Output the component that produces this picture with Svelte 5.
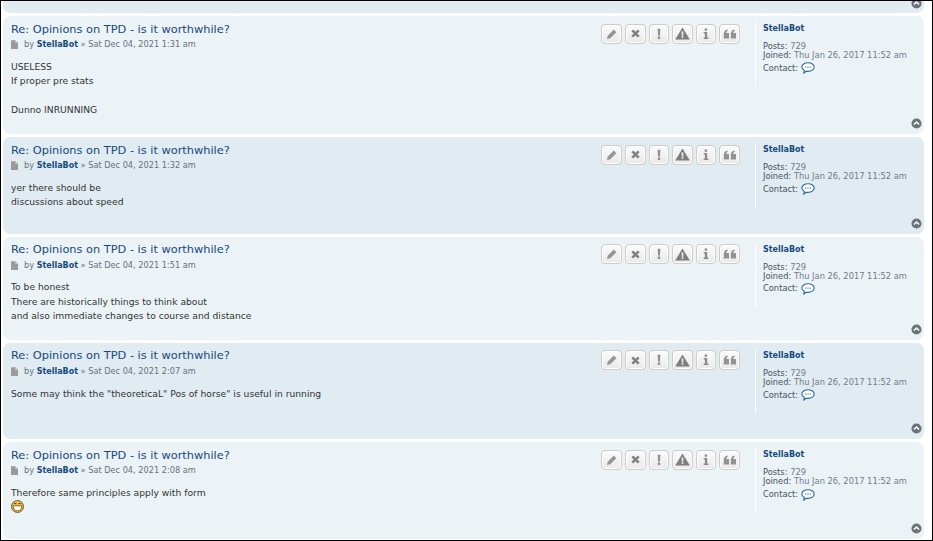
<script>
  const posts = [
    { time: 'Sat Dec 04, 2021 1:31 am', lines: ['USELESS', 'If proper pre stats', '', 'Dunno INRUNNING'], alt: false, height: 118 },
    { time: 'Sat Dec 04, 2021 1:32 am', lines: ['yer there should be', 'discussions about speed'], alt: true, height: 96.6 },
    { time: 'Sat Dec 04, 2021 1:51 am', lines: ['To be honest', 'There are historically things to think about', 'and also immediate changes to course and distance'], alt: false, height: 103.4 },
    { time: 'Sat Dec 04, 2021 2:07 am', lines: ['Some may think the "theoreticaL" Pos of horse" is useful in running'], alt: true, height: 96.4 },
    { time: 'Sat Dec 04, 2021 2:08 am', lines: ['Therefore same principles apply with form'], alt: false, height: 97, smile: true }
  ];
  const buttons = ['edit', 'delete', 'report', 'warn', 'info', 'quote'];
</script>

{#snippet topIcon()}
  <svg class="top-icon" viewBox="0 0 12 12" width="11" height="11">
    <circle cx="6" cy="6" r="5.5" fill="#6b7278" />
    <path d="M3.2 7.2 6 4.4l2.8 2.8" fill="none" stroke="#fff" stroke-width="1.6" />
  </svg>
{/snippet}

<div class="page">
  <div class="stub">{@render topIcon()}</div>
  {#each posts as post}
    <article class="post" class:alt={post.alt} style="height: {post.height}px">
      <div class="main">
        <div class="head">
          <div>
            <h3>Re: Opinions on TPD - is it worthwhile?</h3>
            <p class="author">
              <svg class="file" viewBox="0 0 8 10" width="7" height="9">
                <path d="M0 0h5l3 3v7H0z" fill="#9a9a9a" />
                <path d="M5 0l3 3H5z" fill="#d4d4d4" />
              </svg>
              <span>by <b>StellaBot</b> » {post.time}</span>
            </p>
          </div>
          <div class="buttons">
            {#each buttons as b}
              <span class="btn">
                {#if b === 'edit'}
                  <svg viewBox="0 0 12 12" width="12" height="12"><path d="M1 11l.7-3.300L7.800 1.600l2.600 2.600-6.100 6.100z" fill="#959595" /></svg>
                {:else if b === 'delete'}
                  <svg viewBox="0 0 12 12" width="11" height="11"><path d="M2.500 2.500l7 7M9.500 2.500l-7 7" stroke="#808080" stroke-width="2.800" /></svg>
                {:else if b === 'report'}
                  <svg viewBox="0 0 12 12" width="12" height="12"><path d="M4.600 .8h2.800l-.5 6.900H5.100zM4.800 8.600h2.400v2.400H4.800z" fill="#909090" /></svg>
                {:else if b === 'warn'}
                  <svg viewBox="0 0 14 12" width="15" height="13"><path d="M7 .3l6.800 11.400H.2z" fill="#7d7d7d" /><path d="M6.200 4h1.600v4H6.200zM6.200 8.600h1.600v1.500H6.200z" fill="#e8e8e8" /></svg>
                {:else if b === 'info'}
                  <svg viewBox="0 0 12 12" width="12" height="12"><path d="M4.700 .6h2.400v2.200H4.700zM3.700 4h3.500v5.400h1.200V11H3.700V9.400h1.200V5.600H3.700z" fill="#8a8a8a" /></svg>
                {:else}
                  <svg viewBox="0 0 14 12" width="14" height="12"><path d="M.8 10.500V6c0-2.500 1.300-4.100 3.800-4.600v1.700c-.9.300-1.200.9-1.300 1.900h2.700v5.500zM7.800 10.500V6c0-2.500 1.300-4.100 3.800-4.600v1.700c-.9.300-1.200.9-1.300 1.900h2.700v5.500z" fill="#929292" /></svg>
                {/if}
              </span>
            {/each}
          </div>
        </div>
        <div class="body">
          {#each post.lines as line}
            <div class="line">{line}</div>
          {/each}
          {#if post.smile}
            <svg class="smile" viewBox="0 0 13 13" width="13" height="13">
              <circle cx="6.500" cy="6.500" r="6" fill="#eebb3a" stroke="#6f6238" stroke-width="1" />
              <path d="M2.200 5.800h8.600c0 3.200-1.700 5-4.300 5S2.200 9 2.200 5.800z" fill="#fff" stroke="#5f5428" stroke-width=".8" />
              <path d="M3 3.500h2.500M7.500 3.500H10" stroke="#5f5428" stroke-width="1.100" />
            </svg>
          {/if}
        </div>
      </div>
      <aside class="profile">
        <div class="name">StellaBot</div>
        <div class="stat">Posts: <span>729</span></div>
        <div class="stat">Joined: <span>Thu Jan 26, 2017 11:52 am</span></div>
        <div class="contact">Contact:
          <svg viewBox="0 0 14 12" width="14" height="12">
            <path d="M7 .8c3.400 0 6.200 1.900 6.200 4.300S10.400 9.400 7 9.400c-.6 0-1.200-.1-1.700-.2L2.800 11l.5-2.700C1.700 7.500.8 6.400.8 5.100.8 2.700 3.600.8 7 .8z" fill="#fff" stroke="#2a6a9a" stroke-width="1.100" />
            <path d="M4.300 5.100h1M6.500 5.100h1M8.700 5.100h1" stroke="#2a6a9a" stroke-width="1.100" />
          </svg>
        </div>
      </aside>
      {@render topIcon()}
    </article>
  {/each}
</div>

<style>
  :global(body) {
    background: #fff;
  }

  .page {
    width: 933px;
    height: 541px;
    box-sizing: border-box;
    border: 1px solid #000;
    padding: 0 8px 0 2px;
    display: flex;
    flex-direction: column;
    gap: 3px;
    overflow: hidden;
    background: #fff;
    font-family: "DejaVu Sans", Verdana, sans-serif;
    font-size: 8.300px;
    color: #333;
  }

  .stub {
    flex: none;
    height: 12px;
    background: #e1ebf2;
    border-radius: 0 0 7px 7px;
    position: relative;
  }

  .stub .top-icon {
    bottom: 4px;
  }

  .post {
    flex: none;
    box-sizing: border-box;
    background: #ecf3f7;
    border-radius: 7px;
    display: flex;
    position: relative;
  }

  .post.alt {
    background: #e1ebf2;
  }

  .main {
    flex: 1;
    padding: 4.500px 0 0 8px;
  }

  .head {
    display: flex;
    justify-content: space-between;
    padding-right: 15px;
  }

  h3 {
    margin: 0;
    font-size: 11.350px;
    font-weight: normal;
    line-height: 16px;
    color: #154a7d;
  }

  .author {
    margin: .6px 0 0;
    display: flex;
    align-items: center;
    gap: 6px;
    line-height: 15px;
    color: #67727d;
    font-size: 8.200px;
  }

  .author b {
    color: #154a7d;
    font-size: 8px;
  }

  .buttons {
    display: flex;
    gap: 3px;
    padding-top: 3px;
  }

  .btn {
    box-sizing: border-box;
    width: 20.600px;
    height: 20px;
    border: 1px solid #cfcbc8;
    border-radius: 4px;
    background: linear-gradient(#fbfbfb, #e9e9e9);
    box-shadow: 0 0 0 1px #fff inset;
    display: flex;
    align-items: center;
    justify-content: center;
  }

  .body {
    margin-top: 7.700px;
    font-size: 9.200px;
    line-height: 14.400px;
    color: #333;
  }

  .line {
    min-height: 14.400px;
  }

  .smile {
    display: block;
    margin-top: -1px;
  }

  .profile {
    flex: none;
    align-self: flex-start;
    width: 169px;
    height: 65px;
    box-sizing: border-box;
    margin-top: 6px;
    padding: 2px 0 0 7px;
    border-left: 1px solid #fff;
    color: #46525e;
    font-size: 8.300px;
    line-height: 9px;
  }

  .name {
    font-weight: bold;
    font-size: 8px;
    color: #154a7d;
    margin-bottom: 8px;
    line-height: 10px;
  }

  .stat span {
    color: #6f7c88;
  }

  .contact {
    display: flex;
    align-items: center;
    gap: 3px;
    margin-top: 2.300px;
  }

  .top-icon {
    position: absolute;
    right: 2px;
    bottom: 5px;
  }
</style>
